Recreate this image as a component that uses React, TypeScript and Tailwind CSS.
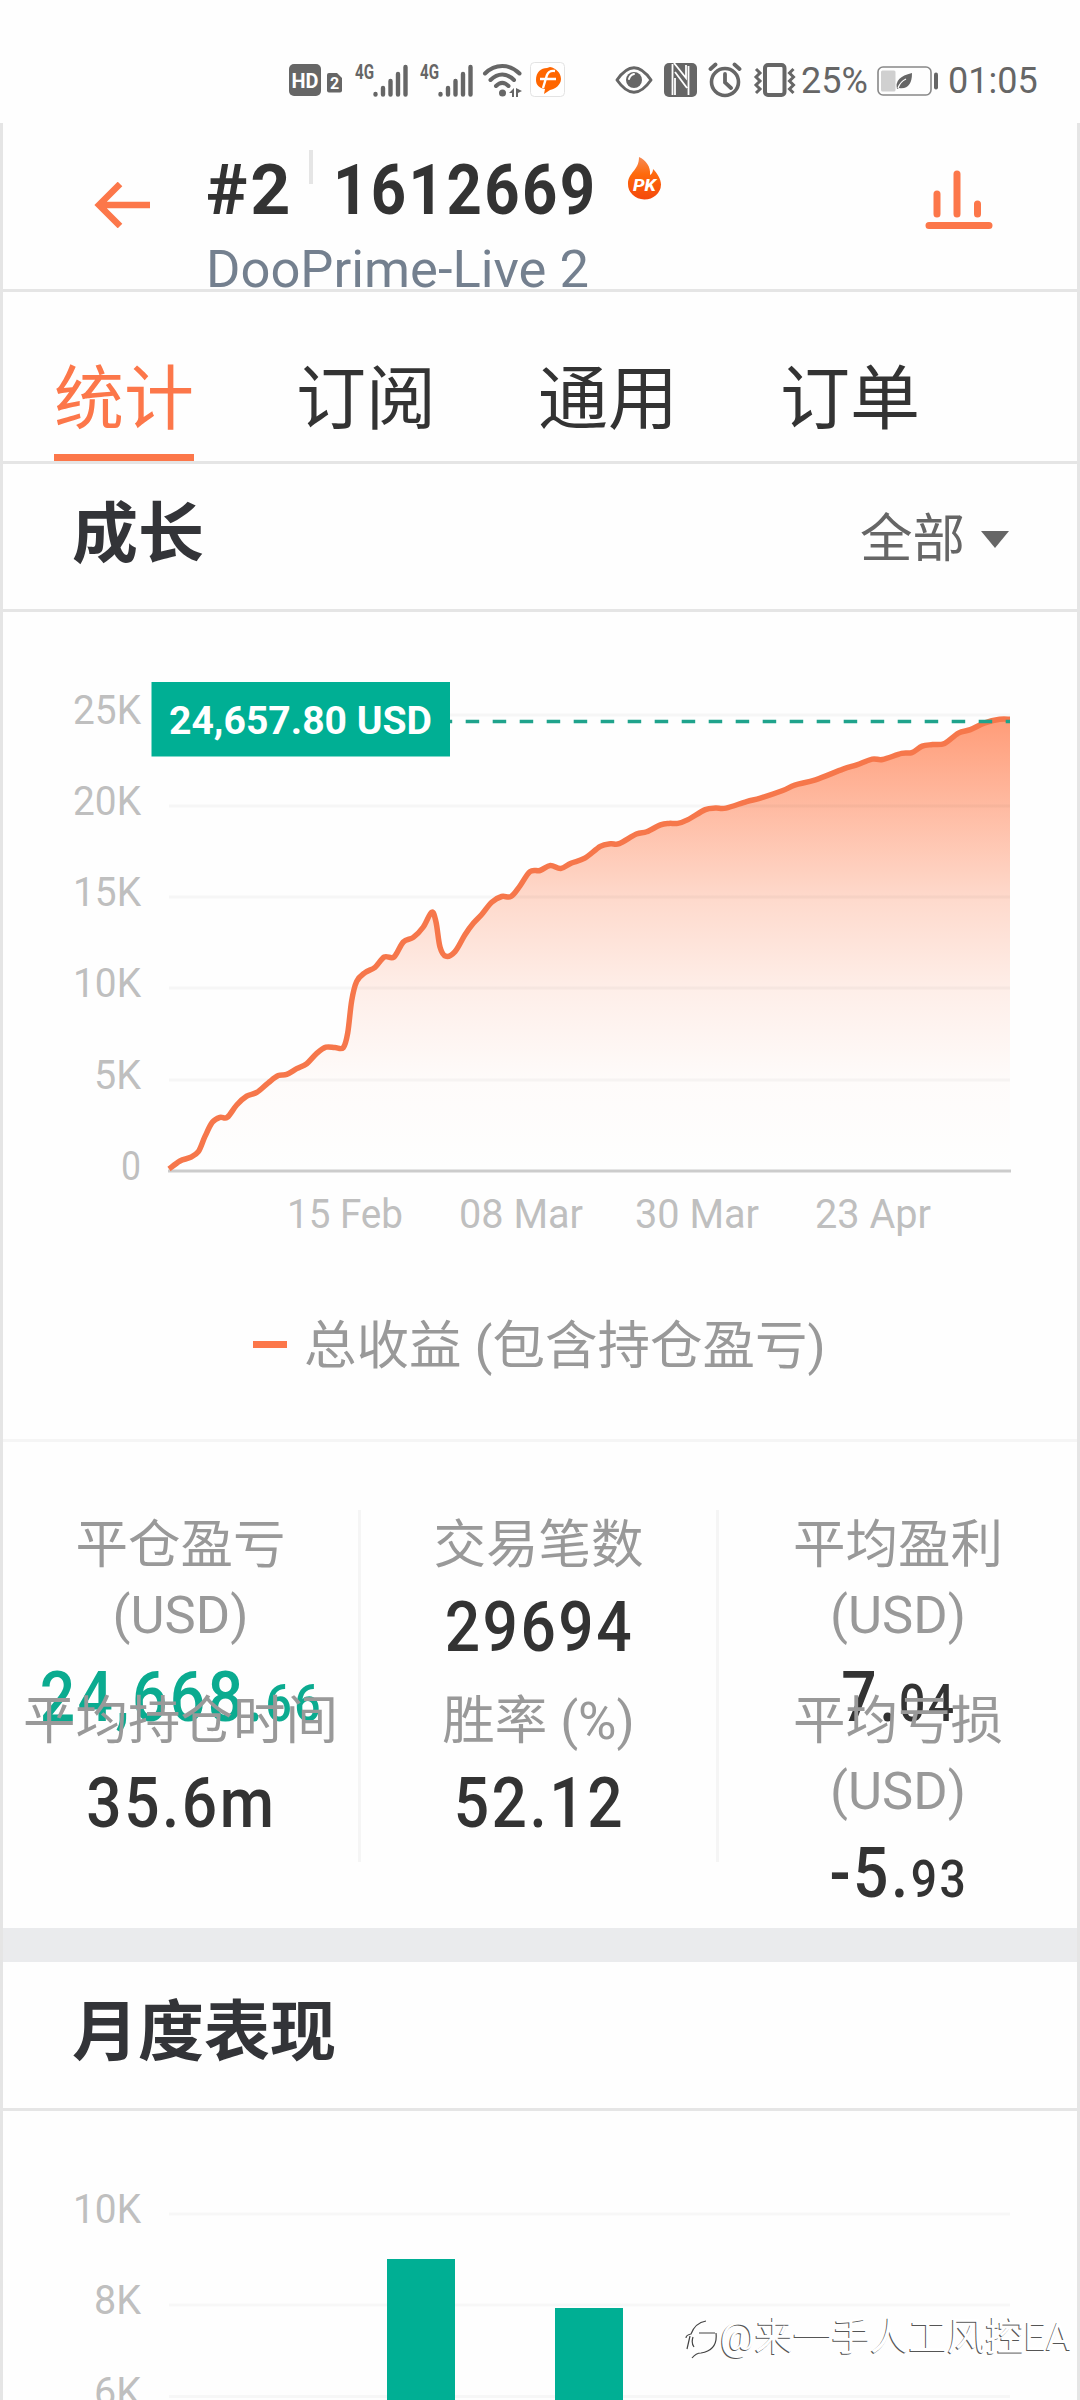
const growth = [
  [169, 1169], [180, 1161], [190, 1157.5], [198.3, 1151.7], [205, 1136.4], [212.3, 1122.3], [220, 1117.3], [227.3, 1117.3],
  [236.7, 1105], [246.7, 1096.2], [256.7, 1092.4], [268.3, 1082.8], [278.3, 1075.6], [286.7, 1074.4], [296.7, 1068.7],
  [306.7, 1063.7], [316.7, 1053.4], [326, 1047.2], [335, 1047.6], [343.3, 1047.6], [347.7, 1033], [351.7, 1000.6],
  [356.7, 981.4], [365, 972.6], [375, 967.3], [384.3, 957], [394, 957], [403.3, 942], [413.3, 937.4], [423.3, 927],
  [431.7, 912.2], [436, 922], [440, 947], [445.7, 956.2], [455, 951.6], [465, 934.7], [473.3, 923.3], [481.7, 914.5],
  [491.7, 902.2], [501.7, 896.5], [511, 896.5], [520, 885.8], [530, 871.6], [540, 870.5], [550.3, 865.5], [560.7, 868.5],
  [571, 863.2], [584.8, 858.2], [600.3, 846.4], [610.6, 843.7], [619.2, 843.7], [636.4, 834.1], [646.7, 831.8],
  [660.5, 824.9], [669.1, 823.4], [677.7, 823.4], [688, 819.6], [705.3, 809.6], [715.6, 808.1], [726, 808.1],
  [746.6, 801.6], [760.4, 798.1], [782.8, 790.5], [794.8, 785.1], [815.5, 779.8], [843, 769.1], [856.8, 764.8],
  [872.3, 759.1], [882.6, 759.5], [901.6, 753.4], [911.9, 752.6], [922.2, 746.1], [932.6, 744.6], [944.6, 743.4],
  [958.4, 733.1], [970.4, 729.6], [984.2, 723.1], [999.7, 719.3], [1010, 719.3],
];

function smooth(points: number[][]) {
  let d = `M${points[0][0]} ${points[0][1]}`;
  for (let i = 0; i < points.length - 1; i++) {
    const a = points[i - 1] || points[i];
    const b = points[i];
    const c = points[i + 1];
    const e = points[i + 2] || c;
    d += ` C${b[0] + (c[0] - a[0]) / 6} ${b[1] + (c[1] - a[1]) / 6} ${c[0] - (e[0] - b[0]) / 6} ${c[1] - (e[1] - b[1]) / 6} ${c[0]} ${c[1]}`;
  }
  return d;
}

const growthTicks = [
  { label: "25K", y: 715, w: 68 },
  { label: "20K", y: 806, w: 68 },
  { label: "15K", y: 897, w: 68 },
  { label: "10K", y: 988, w: 68 },
  { label: "5K", y: 1080, w: 47 },
  { label: "0", y: 1171, w: 20 },
];

const dates = [
  { label: "15 Feb", x: 287, w: 116 },
  { label: "08 Mar", x: 459, w: 124 },
  { label: "30 Mar", x: 635, w: 124 },
  { label: "23 Apr", x: 815, w: 116 },
];

const monthTicks = [
  { label: "10K", y: 2214, w: 68 },
  { label: "8K", y: 2305, w: 47 },
  { label: "6K", y: 2396.5, w: 47 },
];

const stats = [
  [
    { label: ["平仓盈亏", "(USD)"], value: "24,668.", small: "66", color: "text-[#0bab90]" },
    { label: ["平均持仓时间"], value: "35.6m", small: "", color: "text-[#333333]" },
  ],
  [
    { label: ["交易笔数"], value: "29694", small: "", color: "text-[#333333]" },
    { label: ["胜率 (%)"], value: "52.12", small: "", color: "text-[#333333]" },
  ],
  [
    { label: ["平均盈利", "(USD)"], value: "7.", small: "04", color: "text-[#333333]" },
    { label: ["平均亏损", "(USD)"], value: "-5.", small: "93", color: "text-[#333333]" },
  ],
];

function Signal() {
  return (
    <svg width="54" height="36" viewBox="0 0 54 36" className="shrink-0 overflow-visible">
      <text x="0" y="17" fontSize="20" fontWeight="700" textLength="19" lengthAdjust="spacingAndGlyphs" fill="#666">4G</text>
      <g stroke="#666" strokeWidth="4.400" strokeLinecap="round">
        <path d="M20.5 32v0.5M28 26v6.500M35.500 19v13.500M43 12v20.500M50.500 5v27.500" />
      </g>
    </svg>
  );
}

function StatusBar() {
  return (
    <div className="flex h-[123px] items-center pl-[289px] pt-[36px] text-[36px] leading-none text-[#666666]">
      <svg width="32" height="32" viewBox="0 0 32 32" className="shrink-0">
        <rect width="32" height="32" rx="5" fill="#666" />
        <text x="2.500" y="23.500" fontSize="21" fontWeight="700" textLength="27" lengthAdjust="spacingAndGlyphs" fill="#fff">HD</text>
      </svg>
      <svg width="15" height="20" viewBox="0 0 15 20" className="ml-[6px] mt-[6px] shrink-0">
        <path d="M2 0h8l5 5v12.500a2 2 0 0 1-2 2H2a2 2 0 0 1-2-2V2a2 2 0 0 1 2-2z" fill="#666" />
        <text x="3" y="16" fontSize="16" fontWeight="700" fill="#fff">2</text>
      </svg>
      <div className="ml-[13px] flex gap-[11px]">
        <Signal />
        <Signal />
      </div>
      <svg width="41" height="36" viewBox="0 0 41 36" className="ml-[8px] shrink-0">
        <g fill="none" stroke="#666" strokeWidth="4" strokeLinecap="round">
          <path d="M3 11.500C13 1.500 27.500 1.500 37.500 11.500" />
          <path d="M8.500 18C16 10.500 24.500 10.500 32 18" />
          <path d="M14 24C18 20 22.500 20 26.500 24" />
        </g>
        <circle cx="20.500" cy="31" r="3.500" fill="#666" />
        <path d="M27 31l5-5v9h-2v-4zM34 26l6 3-4 2v4h-2z" fill="#666" />
      </svg>
      <svg width="36" height="36" viewBox="0 0 36 36" className="ml-[7px] shrink-0">
        <rect x="0.500" y="0.500" width="34" height="34" rx="4" fill="#fff" stroke="#e3e3e3" />
        <path d="M6 18C6 10 11 6 17 6l3-1c6 1 11 6 11 12s-6 10-11 11l-6 4 1-5C9 26 6 23 6 18z" fill="#ff6600" />
        <path d="M13 26l4-13q2-5 8-4M10 17h16" fill="none" stroke="#fff" strokeWidth="2.400" />
      </svg>
      <svg width="38" height="30" viewBox="0 0 38 30" className="ml-[49px] shrink-0">
        <path d="M2 15Q19-9.500 36 15Q19 39.500 2 15z" fill="none" stroke="#666" strokeWidth="3" strokeLinejoin="round" />
        <circle cx="19" cy="15" r="8" fill="#666" />
        <path d="M14 14q1-4 5-5" fill="none" stroke="#fff" strokeWidth="2" strokeLinecap="round" />
      </svg>
      <svg width="33" height="34" viewBox="0 0 33 34" className="ml-[11px] shrink-0">
        <rect width="33" height="34" rx="5" fill="#666" />
        <path d="M8.500 1v31M11 9l12 16M11 15v17M10 0l12 15V2M24.500 3v29" fill="none" stroke="#fff" strokeWidth="1.800" />
      </svg>
      <svg width="34" height="36" viewBox="0 0 34 36" className="ml-[11px] shrink-0">
        <circle cx="17" cy="20" r="13.500" fill="none" stroke="#666" strokeWidth="3.600" />
        <path d="M17 12v8.500l6 5.500M2.500 7l5-4.500M31.500 7l-5-4.500" fill="none" stroke="#666" strokeWidth="3.800" strokeLinecap="round" />
      </svg>
      <svg width="44" height="34" viewBox="0 0 44 34" className="ml-[11px] shrink-0">
        <rect x="12" y="2" width="19.500" height="30" rx="3" fill="none" stroke="#666" strokeWidth="4" />
        <path d="M3 6l4 4-4 4 4 4-4 4 4 4-4 4M40.500 6l-4 4 4 4-4 4 4 4-4 4 4 4" fill="none" stroke="#666" strokeWidth="3" />
      </svg>
      <span className="ml-[4px] w-[76px] pt-[2px]">25%</span>
      <svg width="62" height="30" viewBox="0 0 62 30" className="mt-[2px] shrink-0">
        <rect x="1" y="1" width="53" height="28" rx="5" fill="none" stroke="#888" strokeWidth="1.600" />
        <rect x="4" y="4.500" width="14.500" height="21" rx="1.500" fill="#d0d0d0" />
        <path d="M20 23q-3-12 15-16 0 17-13 15z" fill="#666" />
        <path d="M21 22q2-6 8-9" fill="none" stroke="#fff" strokeWidth="1.200" />
        <rect x="57" y="6.500" width="4" height="17" rx="2" fill="#666" />
      </svg>
      <span className="ml-[9px] pt-[2px]">01:05</span>
    </div>
  );
}

function Header() {
  return (
    <header className="flex h-[169px] border-b-[3px] border-[#e5e5e5] pl-[91px]">
      <svg width="58" height="46" viewBox="0 0 58 46" className="mt-[59px] shrink-0">
        <path d="M26 2L5 23l21 21M5 23h51" fill="none" stroke="#fc774a" strokeWidth="6.500" />
      </svg>
      <div className="ml-[54px] w-[388px]">
        <div className="flex h-[116px] pt-[32px] text-[70px] font-bold leading-[70px] tracking-[2.8px] text-[#333333]">
          <span className="w-[102px] shrink-0">#2</span>
          <span className="-mt-[5px] ml-px h-[34px] w-[4px] shrink-0 bg-[#e5e5e5]" />
          <span className="ml-[20px] shrink-0 origin-left scale-x-[0.88]">1612669</span>
        </div>
        <div className="whitespace-nowrap text-[52.5px] leading-[60px] text-[#74808f]">DooPrime-Live 2</div>
      </div>
      <svg width="34" height="44" viewBox="0 0 34 44" className="ml-[33px] mt-[34px] shrink-0">
        <defs>
          <linearGradient id="flame" x1="0" y1="0" x2="0" y2="1">
            <stop offset="0" stopColor="#f58a55" />
            <stop offset="0.4" stopColor="#ff6a0c" />
            <stop offset="1" stopColor="#f4480c" />
          </linearGradient>
        </defs>
        <path d="M12 0C19 3 24 10 23 18q3-2 3-6c4 4 8 10 8 15.500A16.300 15 0 0 1 1 27C1 15 12 14 12 0z" fill="url(#flame)" />
        <text x="6" y="34" fontSize="17" fontWeight="800" fontStyle="italic" textLength="23" lengthAdjust="spacingAndGlyphs" fill="#fff">PK</text>
      </svg>
      <svg width="68" height="60" viewBox="0 0 68 60" className="ml-[264px] mt-[47px] shrink-0">
        <path d="M12 24v20M32 4v40M52.500 34v10M4 55.500h60" stroke="#fc774a" strokeWidth="7" strokeLinecap="round" />
      </svg>
    </header>
  );
}

function GrowthChart() {
  const line = smooth(growth);
  return (
    <svg width="1074" height="660" viewBox="3 612 1074 660" className="block">
      <defs>
        <linearGradient id="area" gradientUnits="userSpaceOnUse" x1="0" y1="719" x2="0" y2="1171">
          <stop offset="0" stopColor="#ff9c78" />
          <stop offset="0.2" stopColor="#ff9c78" stopOpacity="0.68" />
          <stop offset="0.4" stopColor="#ff9c78" stopOpacity="0.37" />
          <stop offset="0.6" stopColor="#ff9c78" stopOpacity="0.16" />
          <stop offset="0.8" stopColor="#ff9c78" stopOpacity="0.03" />
          <stop offset="1" stopColor="#ff9c78" stopOpacity="0" />
        </linearGradient>
      </defs>
      <path d={`${line} V1171 H169 Z`} fill="url(#area)" />
      {growthTicks.map((t) => (
        <g key={t.label}>
          {t.label !== "0" && <path d={`M169 ${t.y}H1010`} stroke="#000" strokeOpacity="0.03" strokeWidth="3" />}
          <text x={141 - t.w} y={t.y + 9} fontSize="40.5" textLength={t.w} lengthAdjust="spacingAndGlyphs" fill="#bfbfbf">{t.label}</text>
        </g>
      ))}
      <path d="M168 1171H1011" stroke="#cccccc" strokeWidth="3" />
      <path d={line} fill="none" stroke="#f6774b" strokeWidth="5.500" strokeLinejoin="round" />
      <path d="M438.700 721.500H1010" stroke="#1fa38c" strokeWidth="3.500" strokeDasharray="13.500 13.500" />
      <rect x="151.500" y="682" width="298.500" height="74.500" fill="#00af94" />
      <text x="169" y="734" fontSize="38" fontWeight="700" textLength="263" lengthAdjust="spacingAndGlyphs" fill="#fff">24,657.80 USD</text>
      {dates.map((d) => (
        <text key={d.label} x={d.x} y="1228" fontSize="40" textLength={d.w} lengthAdjust="spacingAndGlyphs" fill="#bfbfbf">{d.label}</text>
      ))}
    </svg>
  );
}

function MonthChart() {
  return (
    <svg width="1074" height="289" viewBox="3 2111 1074 289" className="block">
      {monthTicks.map((t) => (
        <g key={t.label}>
          <path d={`M169 ${t.y}H1010`} stroke="#f7f7f7" strokeWidth="3" />
          <text x={141 - t.w} y={t.y + 9} fontSize="40.5" textLength={t.w} lengthAdjust="spacingAndGlyphs" fill="#bfbfbf">{t.label}</text>
        </g>
      ))}
      <rect x="387" y="2259" width="68" height="141" fill="#00af94" />
      <rect x="555" y="2308" width="68" height="92" fill="#00af94" />
    </svg>
  );
}

export default function App() {
  return (
    <div className="relative h-[2400px] w-[1080px] overflow-hidden bg-[#fefefe] font-['Roboto','Noto_Sans_CJK_SC',sans-serif]">
      <StatusBar />
      <main className="border-x-[3px] border-[#e5e5e5]">
        <Header />
        <nav className="flex h-[172px] gap-[102px] border-b-[3px] border-[#e5e5e5] pl-[51px] text-[70px] leading-[100px] text-[#333333]">
          <div className="h-[169px] border-b-[7px] border-[#fc774a] pt-[58px] text-[#fc774a]">统计</div>
          <div className="pt-[58px]">订阅</div>
          <div className="pt-[58px]">通用</div>
          <div className="pt-[58px]">订单</div>
        </nav>
        <section>
          <div className="flex h-[148px] justify-between border-b-[3px] border-[#e5e5e5] pl-[69px] pr-[68px]">
            <h2 className="pt-[21px] text-[66px] font-bold leading-[100px] text-[#333438]">成长</h2>
            <div className="flex text-[52.5px] leading-[80px] text-[#666666]">
              <span className="pt-[35px]">全部</span>
              <svg width="28" height="18" viewBox="0 0 28 18" className="ml-[16px] mt-[67px]">
                <path d="M0 0h28L14 17z" fill="#666" />
              </svg>
            </div>
          </div>
          <GrowthChart />
          <div className="flex h-[170px] border-b-[3px] border-[#f5f5f5] pl-[250px] text-[52.5px] leading-[76px] text-[#999999]">
            <span className="mt-[69px] h-[7px] w-[34px] bg-[#fc774a]" />
            <span className="ml-[17px] mt-[36px]">总收益 (包含持仓盈亏)</span>
          </div>
        </section>
        <section className="h-[486px] pt-[68px]">
          <div className="grid h-[351px] grid-cols-3">
            {stats.map((column, i) => (
              <div key={i} className={i < 2 ? "border-r-[3px] border-[#f5f5f5]" : ""}>
                {/* relative keeps the second row painted over a first row that runs too tall */}
                {column.map((s) => (
                  <div key={s.value} className="relative h-[176px] text-center">
                    {s.label.map((l) => (
                      <div key={l} className="whitespace-nowrap text-[52.5px] leading-[70px] text-[#999999]">{l}</div>
                    ))}
                    <div className={`scale-x-[0.89] whitespace-nowrap pl-[2px] pt-[12px] text-[70px] font-medium leading-[70px] tracking-[2.8px] ${s.color}`}>
                      {s.value}
                      <span className="text-[52px]">{s.small}</span>
                    </div>
                  </div>
                ))}
              </div>
            ))}
          </div>
        </section>
        <section>
          <div className="h-[183px] border-b-[3px] border-t-[34px] border-b-[#e5e5e5] border-t-[#eaebed] pl-[69px]">
            <h2 className="pt-[21px] text-[66px] font-bold leading-[100px] text-[#333438]">月度表现</h2>
          </div>
          <MonthChart />
        </section>
      </main>
      <div className="absolute left-[685px] top-[2311px] flex items-center text-[38.5px] leading-[52px] text-white [text-shadow:-1px_1px_0_#555]">
        <svg width="32" height="40" viewBox="0 0 32 40" className="mr-[3px] mt-[4px]">
          <path d="M1 19q0-3 5-4Q10 4 21 2M5 17L2 30M14 14h16M31 14q2 17-15 20-5 0-9 5M9 28Q6 24 8 18" fill="none" stroke="#444" strokeWidth="1.200" />
        </svg>
        <span className="whitespace-nowrap">@来一手人工风控EA</span>
      </div>
    </div>
  );
}
